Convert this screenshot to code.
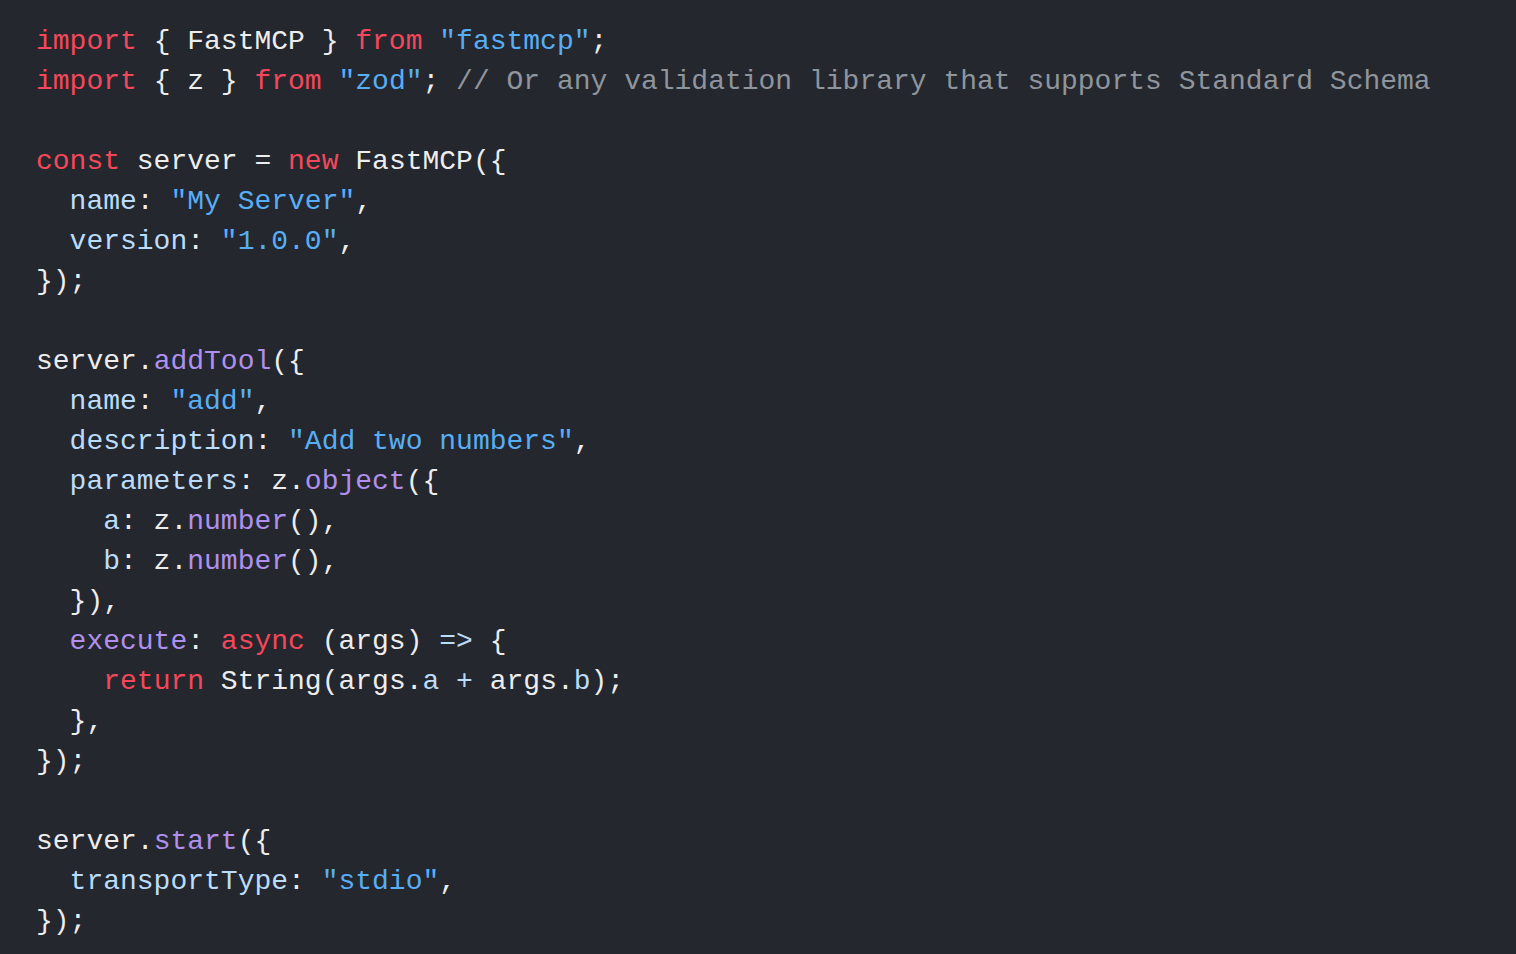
import React from "react";

type Tok = [string, string];

const R = "text-[#f5475b]";
const W = "text-[#ededed]";
const S = "text-[#58aef5]";
const P = "text-[#bcdcfb]";
const F = "text-[#b090ec]";
const C = "text-[#8f959c]";

const lines: Tok[][] = [
  [["import", R], [" { FastMCP } ", W], ["from", R], [" ", W], ['"fastmcp"', S], [";", W]],
  [["import", R], [" { z } ", W], ["from", R], [" ", W], ['"zod"', S], ["; ", W], ["// Or any validation library that supports Standard Schema", C]],
  [],
  [["const", R], [" server = ", W], ["new", R], [" FastMCP({", W]],
  [["  name", P], [": ", W], ['"My Server"', S], [",", W]],
  [["  version", P], [": ", W], ['"1.0.0"', S], [",", W]],
  [["});", W]],
  [],
  [["server.", W], ["addTool", F], ["({", W]],
  [["  name", P], [": ", W], ['"add"', S], [",", W]],
  [["  description", P], [": ", W], ['"Add two numbers"', S], [",", W]],
  [["  parameters", P], [": z.", W], ["object", F], ["({", W]],
  [["    a", P], [": z.", W], ["number", F], ["(),", W]],
  [["    b", P], [": z.", W], ["number", F], ["(),", W]],
  [["  }),", W]],
  [["  execute", F], [": ", W], ["async", R], [" (args) ", W], ["=>", P], [" {", W]],
  [["    ", W], ["return", R], [" String(args.", W], ["a", P], [" ", W], ["+", P], [" args.", W], ["b", P], [");", W]],
  [["  },", W]],
  [["});", W]],
  [],
  [["server.", W], ["start", F], ["({", W]],
  [["  transportType", P], [": ", W], ['"stdio"', S], [",", W]],
  [["});", W]],
];

export default function App() {
  return (
    <div className="min-h-[954px] w-full bg-[#24272d] pl-[36px] pt-[22px] font-['Liberation_Mono',monospace] text-[28px] leading-[40px]">
      {lines.map((l, i) => (
        <div key={i} className="h-[40px] whitespace-pre">
          {l.map((t, j) => (
            <span key={j} className={t[1]}>
              {t[0]}
            </span>
          ))}
        </div>
      ))}
    </div>
  );
}
